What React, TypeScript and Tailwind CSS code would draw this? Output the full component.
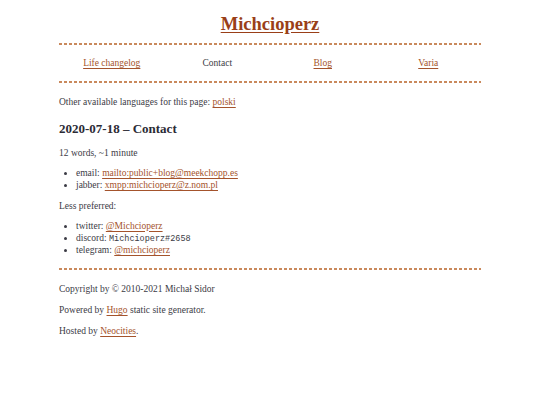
const links = [
  { label: "Life changelog", href: "#", current: false },
  { label: "Contact", href: "#", current: true },
  { label: "Blog", href: "#", current: false },
  { label: "Varia", href: "#", current: false },
]

const link = "text-[#a4532c] underline underline-offset-[1.5px]"

// dotted-dash rule like the site's border
function Dashed() {
  return <div className="h-[2px] bg-[repeating-linear-gradient(90deg,#c9895c_0_3px,transparent_3px_5px)]" />
}

export default function App() {
  return (
    <div className="min-h-[405px] bg-white font-['Liberation_Serif',serif] text-[9.5px] text-[#3b3b45]">
      <div className="mx-auto w-[422px] pt-[12px]">
        <h1 className="text-center text-[18.5px] font-bold leading-[24px] text-[#9a3f18]">
          <a href="#" className="underline underline-offset-[2px]">Michcioperz</a>
        </h1>
        <div className="mt-[7px]">
          <Dashed />
        </div>
        <nav className="grid grid-cols-4 py-[12px] text-center leading-[12px]">
          {links.map(l =>
            l.current ? (
              <span key={l.label}>{l.label}</span>
            ) : (
              <a key={l.label} href={l.href} className={link}>
                {l.label}
              </a>
            )
          )}
        </nav>
        <Dashed />
        <p className="mt-[13px] leading-[12px]">
          Other available languages for this page: <a href="#" className={link}>polski</a>
        </p>
        <h2 className="mt-[12px] text-[13px] font-bold leading-[18px] text-[#2b2b35]">2020-07-18 – Contact</h2>
        <p className="mt-[9px] leading-[12px]">12 words, ~1 minute</p>
        <ul className="mt-[8px] list-disc pl-[17px] leading-[12.25px]">
          <li>
            email: <a href="#" className={link}>mailto:public+blog@meekchopp.es</a>
          </li>
          <li>
            jabber: <a href="#" className={link}>xmpp:michcioperz@z.nom.pl</a>
          </li>
        </ul>
        <p className="mt-[8px] leading-[12px]">Less preferred:</p>
        <ul className="mt-[8px] list-disc pl-[17px] leading-[12.25px]">
          <li>
            twitter: <a href="#" className={link}>@Michcioperz</a>
          </li>
          <li>
            discord: <code className="font-['Liberation_Mono',monospace] text-[8.5px] leading-none">Michcioperz#2658</code>
          </li>
          <li>
            telegram: <a href="#" className={link}>@michcioperz</a>
          </li>
        </ul>
        <div className="mt-[12px]">
          <Dashed />
        </div>
        <footer className="leading-[12px]">
          <p className="mt-[13px]">Copyright by © 2010-2021 Michał Sidor</p>
          <p className="mt-[9px]">
            Powered by <a href="#" className={link}>Hugo</a> static site generator.
          </p>
          <p className="mt-[8.5px]">
            Hosted by <a href="#" className={link}>Neocities</a>.
          </p>
        </footer>
      </div>
    </div>
  )
}
